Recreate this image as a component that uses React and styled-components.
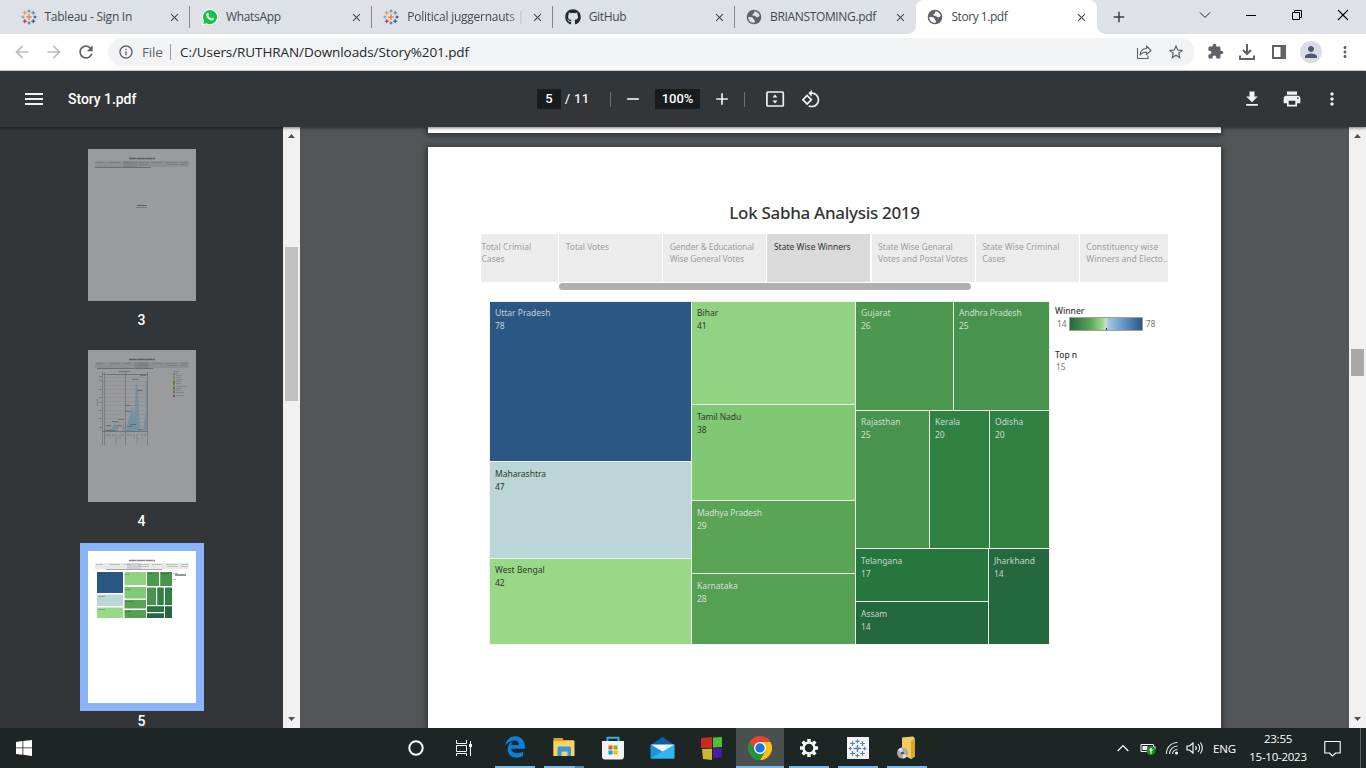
import React from "react";
import styled, { createGlobalStyle, css } from "styled-components";
import {
  MdClose, MdAdd, MdArrowBack, MdArrowForward, MdRefresh, MdInfoOutline,
  MdStarBorder, MdExtension, MdPerson, MdMoreVert, MdMenu, MdRemove, MdFileDownload,
  MdPrint, MdOutlineRotate90DegreesCcw,
} from "react-icons/md";
import { FaGithub, FaEdgeLegacy } from "react-icons/fa6";

const ui = '"Open Sans", "Noto Sans", sans-serif';
const viz = '"Noto Sans", "Open Sans", sans-serif';

const Global = createGlobalStyle`
  * { box-sizing: border-box; }
  body { margin: 0; overflow: hidden; }
  svg { display: block; flex: none; }
`;

const Screen = styled.div`
  width: 1366px;
  height: 768px;
  display: flex;
  flex-direction: column;
  overflow: hidden;
  background: #525659;
  font-family: ${ui};
`;

/* ---------- browser tabs ---------- */
const TabStrip = styled.div`
  height: 34px;
  flex: none;
  display: flex;
  padding-left: 9px;
  background: #dee1e6;
`;
const Tab = styled.div`
  position: relative;
  width: 181.4px;
  height: 34px;
  display: flex;
  align-items: center;
  padding: 0 8px 0 11.5px;
  color: #45494d;
  border-right: 1px solid transparent;
  border-image: ${(p) => (p.$sep ? "linear-gradient(transparent 7px, #85888c 7px, #85888c 27px, transparent 27px) 1" : "none")};
  ${(p) => p.$active && css`
    background: #fff;
    border-radius: 8px 8px 0 0;
    &::before, &::after {
      content: "";
      position: absolute;
      bottom: 0;
      width: 8px;
      height: 8px;
    }
    &::before { left: -8px; background: radial-gradient(circle at 0 0, transparent 7.5px, #fff 8px); }
    &::after { right: -9px; background: radial-gradient(circle at 100% 0, transparent 7.5px, #fff 8px); }
  `}
`;
const TabTitle = styled.div`
  flex: 1;
  margin-left: 8px;
  font-size: 12px;
  line-height: 16px;
  letter-spacing: ${(p) => p.$ls || 0}px;
  white-space: nowrap;
  ${(p) => p.$fade && css`
    mask-image: linear-gradient(90deg, #000 100px, transparent 119px);
  `}
`;
const NewTab = styled.div`
  width: 44px;
  display: grid;
  place-items: center;
  color: #3c4043;
`;
const WindowButtons = styled.div`
  margin-left: auto;
  display: flex;
  height: 29px;
  align-items: center;
  svg { width: 46px; }
`;

/* ---------- address row ---------- */
const AddressRow = styled.div`
  height: 37px;
  flex: none;
  display: flex;
  align-items: center;
  padding: 0 12px 1px 12px;
  background: #fff;
  border-bottom: 1px solid #dcdedb;
  color: #5f6368;
`;
const NavIcons = styled.div`
  display: flex;
  flex: none;
  gap: 12px;
  width: 96px;
  color: #babcbe;
  svg:last-child { color: #5f6368; }
`;
const Omnibox = styled.div`
  width: 1086px;
  flex: none;
  height: 28px;
  display: flex;
  align-items: center;
  padding: 0 9px 0 10px;
  border-radius: 14px;
  background: #f1f3f4;
`;
const Scheme = styled.span`
  margin-left: 8px;
  width: 28px;
  font-size: 13.5px;
  line-height: 20px;
  letter-spacing: -0.2px;
  color: #5f6368;
`;
const Divider = styled.i`
  width: 1px;
  height: ${(p) => p.$h}px;
  background: ${(p) => p.$c};
`;
const Url = styled.span`
  margin-left: 9px;
  flex: 1;
  font-size: 13.5px;
  line-height: 20px;
  letter-spacing: -0.08px;
  color: #25282b;
`;
const Actions = styled.div`
  display: flex;
  align-items: center;
  gap: ${(p) => p.$gap}px;
  margin-left: ${(p) => p.$ml || 0}px;
`;
const Avatar = styled.div`
  width: 22px;
  height: 22px;
  border-radius: 50%;
  display: grid;
  place-items: center;
  background: #dadce3;
  color: #4b5a70;
`;

/* ---------- pdf toolbar ---------- */
const PdfToolbar = styled.div`
  position: relative;
  z-index: 2;
  height: 56px;
  flex: none;
  display: flex;
  align-items: center;
  padding: 0 22px;
  background: #323639;
  color: #f1f1f1;
  font: 500 14px/20px Roboto, sans-serif;
  box-shadow: 0 1px 3px rgba(0, 0, 0, 0.5);
`;
const DocName = styled.div`
  margin-left: 22px;
  width: 469px;
  letter-spacing: -0.05px;
  color: #fff;
`;
const Field = styled.div`
  width: ${(p) => p.$w}px;
  height: 20px;
  background: #191b1c;
  color: #fff;
  text-align: center;
  font-size: 13px;
`;
const PageCount = styled.div`
  width: 45px;
  margin-left: 4px;
  font-size: 13px;
  letter-spacing: 0.35px;
  white-space: pre;
`;
const Spacer = styled.i`
  width: ${(p) => p.$w}px;
`;
const RightTools = styled.div`
  margin-left: auto;
  display: flex;
  gap: 20px;
  margin-right: 2px;
`;

/* ---------- viewer ---------- */
const Viewer = styled.div`
  height: 601px;
  flex: none;
  display: flex;
`;
const Sidebar = styled.div`
  width: 283px;
  background: #323639;
  display: flex;
  flex-direction: column;
  align-items: center;
  padding-top: 14px;
`;
const ThumbFrame = styled.div`
  width: 124px;
  height: 168px;
  flex: none;
  padding: 8px;
  background: ${(p) => (p.$selected ? "#8ab4f8" : "transparent")};
`;
const ThumbPage = styled.div`
  width: 108px;
  height: 152px;
  background: ${(p) => (p.$dim ? "#9a9b9d" : "#fff")};
`;
const ThumbNumber = styled.div`
  height: ${(p) => (p.$last ? 17 : 33)}px;
  flex: none;
  color: #fff;
  font: 500 14px/22px Roboto, sans-serif;
  ${(p) => p.$last && "line-height: 14px; padding-top: 3px;"}
`;
const ScrollTrack = styled.div`
  width: 17px;
  flex: none;
  display: flex;
  flex-direction: column;
  align-items: center;
  background: #f1f1f1;
  padding: 7px 0;
`;
const ScrollThumb = styled.div`
  width: 13px;
  height: ${(p) => p.$h}px;
  margin-top: ${(p) => p.$top}px;
  margin-bottom: auto;
  background: ${(p) => p.$c};
`;
const Canvas = styled.div`
  flex: 1;
  display: flex;
  flex-direction: column;
  align-items: center;
  overflow: hidden;
  background: #525659;
`;
const PrevPage = styled.div`
  width: 793px;
  height: 6px;
  flex: none;
  background: #fff;
  margin-bottom: 14px;
  box-shadow: 0 1px 5px 2px rgba(0, 0, 0, 0.35);
`;
const Page = styled.div`
  width: 793px;
  height: 700px;
  flex: none;
  background: #fff;
  padding: 54px 53px 0;
  box-shadow: 0 1px 5px 2px rgba(0, 0, 0, 0.35);
  font-family: ${viz};
`;
const Title = styled.div`
  height: 33px;
  text-align: center;
  font-weight: 500;
  font-size: 17px;
  line-height: 24px;
  letter-spacing: -0.3px;
  color: #333;
`;
const StoryTabs = styled.div`
  display: grid;
  grid-template-columns: 77px 103px 103px 103px 103px 103px 88px;
  column-gap: 1.15px;
  height: 48px;
`;
const StoryTab = styled.div`
  padding: ${(p) => (p.$first ? "7px 0 0 0.5px" : "7px 0 0 6.5px")};
  background: ${(p) => (p.$active ? "#dadada" : "#ececec")};
  color: ${(p) => (p.$active ? "#333" : "#a0a0a0")};
  font-size: 8.5px;
  line-height: 12px;
  white-space: pre;
  letter-spacing: ${(p) => p.$ls || 0}px;
`;
const StoryScroll = styled.div`
  width: 412px;
  height: 7px;
  margin: 1px 0 11px 78px;
  border-radius: 4px;
  background: #b0b0b0;
`;
const Dashboard = styled.div`
  display: flex;
  padding-left: 8px;
`;
const TreeMap = styled.div`
  width: 561px;
  height: 344px;
  flex: none;
  display: flex;
  gap: 1px;
  padding: 1px;
  background: #eef4ec;
`;
const Stack = styled.div`
  display: flex;
  flex-direction: ${(p) => (p.$row ? "row" : "column")};
  gap: 1px;
  ${(p) => p.$w && `width: ${p.$w}px;`}
  ${(p) => p.$h && `height: ${p.$h}px;`}
`;
const Cell = styled.div`
  ${(p) => (p.$w ? `width: ${p.$w}px;` : "")}
  ${(p) => (p.$h ? `height: ${p.$h}px;` : "")}
  background: ${(p) => p.$bg};
  color: ${(p) => (p.$dark ? "#2f3b2c" : "rgba(255,255,255,0.72)")};
  padding: ${(p) => p.$pt || 5}px 0 0 5px;
  font-size: 8.5px;
  line-height: 12.6px;
  letter-spacing: ${(p) => p.$ls || 0}px;
  white-space: nowrap;
`;
const Legend = styled.div`
  padding: 4px 0 0 5px;
  font-size: 8.5px;
  line-height: 12px;
  color: #777;
`;
const LegendTitle = styled.div`
  font-weight: 500;
  color: #333;
  ${(p) => p.$top && `margin-top: ${p.$top}px;`}
`;
const Ramp = styled.div`
  display: flex;
  align-items: center;
  gap: 2.5px;
  padding-left: 2px;
  height: 13px;
`;
const TopValue = styled.div`
  padding-left: 1px;
`;
const RampBar = styled.div`
  width: 74px;
  height: 14px;
  border: 1px solid #a59f98;
  background:
    linear-gradient(#222, #222) 36px 100% / 1px 2px no-repeat,
    linear-gradient(90deg, #24693d, #5aa456 28%, #98d887 45%, #cfdcd3 50%, #9cc3e0 54%, #6a9cca 72%, #2a5783);
`;

/* ---------- taskbar ---------- */
const Taskbar = styled.div`
  height: 40px;
  flex: none;
  display: flex;
  background: #1e2525;
  color: #fff;
`;
const Slot = styled.div`
  width: ${(p) => p.$w || 49}px;
  margin-left: ${(p) => p.$ml || 0}px;
  height: 40px;
  display: flex;
  flex-direction: column;
  align-items: center;
  padding-top: 8px;
  justify-content: space-between;
`;
const MiddleSlot = styled(Slot)`
  padding: 0;
  justify-content: center;
`;
const Highlight = styled(Slot)`
  width: 48px;
  margin-right: 1px;
  background: #4b504f;
`;
const Underline = styled.i`
  width: ${(p) => (p.$wide ? 48 : 40)}px;
  height: 2px;
  background: ${(p) => (p.$split ? "linear-gradient(90deg, #76b9ed 31px, #3b6a8c 31px, #4f86ad 32px)" : "#76b9ed")};
`;
const Tray = styled.div`
  margin-left: auto;
  display: flex;
  align-items: center;
  width: 251px;
`;
const Language = styled.div`
  width: 34px;
  margin-left: 9px;
  font-size: 11.5px;
  letter-spacing: -0.2px;
`;
const Clock = styled.div`
  width: 62px;
  text-align: center;
  font-size: 11.5px;
  line-height: 18px;
  letter-spacing: -0.25px;
  white-space: nowrap;
`;

/* ---------- drawings ---------- */
const PLUSES = [
  [8, 8, 3, "#e8762b"], [8, 2, 1.6, "#5b879b"], [8, 14, 1.6, "#5b6591"], [2, 8, 1.5, "#7099a6"],
  [14, 8, 1.5, "#1f447e"], [3.8, 3.8, 2, "#eb912c"], [12.2, 3.8, 2, "#59879b"],
  [3.8, 12.2, 2, "#c72035"], [12.2, 12.2, 2, "#1f447e"],
];
const TableauMark = ({ size, mono }) => (
  <svg width={size} height={size} viewBox="0 0 16 16">
    {PLUSES.map(([x, y, r, c], i) => (
      <path key={i} d={`M${x - r} ${y}H${x + r}M${x} ${y - r}V${y + r}`} stroke={mono || c} strokeWidth={r > 2.5 ? 1.2 : 1} />
    ))}
  </svg>
);
const Globe = ({ bg }) => (
  <svg width="16" height="16" viewBox="0 0 16 16">
    <circle cx="8" cy="8" r="7.300" fill="#5f6368" />
    <path d="M8.600 2.200c2.400.3 4.400 2 5.100 4.400-.6 1.200-1.500 1.900-2.900 1.700-1.100-.2-1.200-1.300-2.300-1.500-1-.1-1.900 0-2.100-.9-.2-.9.900-1 1.500-1.500.5-.5.100-1.500.7-2.200z" fill={bg} />
    <path d="M2.200 8.200c1.800-.2 3.700-.2 4.700.5 1 .8.500 1.800 1.300 2.300.9.500 1 1.300.3 2.800-3.400.2-6.100-2.200-6.300-5.600z" fill={bg} />
  </svg>
);
const WhatsAppMark = () => (
  <svg width="16" height="16" viewBox="0 0 16 16">
    <path d="M8 0a8 8 0 1 1-3.800 15L0 16l1.100-4.200A8 8 0 0 1 8 0z" fill="#fff" />
    <path d="M8 .9a7.100 7.100 0 1 1-3.500 13.300L1.200 15l.9-3.300A7.100 7.100 0 0 1 8 .9z" fill="#12c24a" />
    <path d="M5.300 4c.5-.4.9-.2 1.100.3l.5 1.200c.1.4-.5.900-.6 1.200.6 1.200 1.500 2 2.800 2.600.3-.1.8-1 1.200-.9l1.400.700c.5.300.3 1.100-.1 1.600-.7.700-1.700.9-2.900.5C6.300 10.400 4.900 8.700 4.300 7c-.3-1.200 0-2.300 1-3z" fill="#fff" />
  </svg>
);
const ShareIcon = () => (
  <svg width="18" height="18" viewBox="0 0 18 18" fill="none" stroke="#5f6368" strokeWidth="1.100">
    <path d="M2.500 5v10.500h10.500V12.500" />
    <path d="M5 12c.3-4 2.600-6.300 6.500-6.500V3l4.500 4.500-4.500 4.200V9C8.700 9 6.600 10 5 12z" strokeLinejoin="round" />
  </svg>
);
const DownloadTray = () => (
  <svg width="18" height="18" viewBox="0 0 18 18" fill="none" stroke="#5f6368" strokeWidth="2">
    <path d="M9 1v9.500M5 7l4 4 4-4M2 12.500V16h14v-3.500" />
  </svg>
);
const SidePanel = () => (
  <svg width="14" height="14" viewBox="0 0 14 14">
    <path d="M0 0h14v14H0zM2 2v10h6.500V2z" fill="#5f6368" fillRule="evenodd" />
  </svg>
);
const FitPage = () => (
  <svg width="20" height="20" viewBox="0 0 20 20">
    <rect x="1.900" y="3" width="16.400" height="14" rx="1" fill="none" stroke="#f1f1f1" strokeWidth="1.700" />
    <path d="M7.500 8.600h5L10 5.600zM7.500 11.400h5L10 14.400z" fill="#f1f1f1" />
  </svg>
);
const Arrow = ({ down }) => (
  <svg width="7" height="4" viewBox="0 0 7 4">
    <path d={down ? "M0 0h7L3.500 4z" : "M0 4h7L3.500 0z"} fill="#505050" />
  </svg>
);
const WinLogo = () => (
  <svg width="16" height="16" viewBox="0 0 16 16" fill="#fff">
    <path d="M0 2l6.500-.9v6.400H0zM7.300 1L16 0v7.500H7.300zM0 8.300h6.500v6.400L0 14zM7.300 8.300H16V16l-8.700-1.200z" />
  </svg>
);
const TaskView = () => (
  <svg width="18" height="16" viewBox="0 0 18 16" fill="none" stroke="#fff" strokeWidth="1">
    <path d="M1.500 0v3.500h10V0M1.500 5.500h10v6h-10zM1.500 16v-2.500h10V16M15.500 1v3M15.500 7v9" />
    <path d="M14 4h3v3h-3z" fill="#fff" stroke="none" />
  </svg>
);
const Explorer = () => (
  <svg width="22" height="22" viewBox="0 0 22 22">
    <path d="M.5 2h9l1 2H21v16H.5z" fill="#e0a321" />
    <path d="M.5 5h21v15H.5z" fill="#fbd466" />
    <path d="M4.500 20v-8a1.500 1.500 0 0 1 1.500-1.500h10.500A1.500 1.500 0 0 1 18 12v8h-3.500v-4.500h-6V20z" fill="#3c96dc" />
  </svg>
);
const Store = () => (
  <svg width="24" height="24" viewBox="0 0 24 24">
    <path d="M6.500 6V1.800h11V6" fill="none" stroke="#22b5e8" strokeWidth="2" />
    <path d="M1 5h22v16a3 3 0 0 1-3 2.500H4A3 3 0 0 1 1 21z" fill="#f3f3f3" />
    <path d="M7.500 9.500h4v4h-4z" fill="#f05325" /><path d="M12.500 9.500h4v4h-4z" fill="#7fb900" />
    <path d="M7.500 14.500h4v4h-4z" fill="#00a3ee" /><path d="M12.500 14.500h4v4h-4z" fill="#ffb800" />
  </svg>
);
const Mail = () => (
  <svg width="25" height="24" viewBox="0 0 25 24">
    <path d="M.5 9L12.500 1l12 8v5H.5z" fill="#0a5fae" />
    <path d="M1 8.500h23.500L13 18z" fill="#f4f6f8" />
    <path d="M.5 8.500L24.500 22.500H.5z" fill="#1c93de" />
    <path d="M24.500 8.500v14H.5z" fill="#33b6ef" />
  </svg>
);
const Blocks = () => (
  <svg width="23" height="24" viewBox="0 0 23 24">
    <path d="M1 2l11-1v11H1z" fill="#c62a20" /><path d="M13 1.500l9-.5v10l-9 .5z" fill="#50bd34" />
    <path d="M2 13l10-.3V24l-9-1z" fill="#c9b934" /><path d="M13 12.500h9l-.5 8.500-8.500 1.500z" fill="#4b1bad" />
  </svg>
);
const Chrome = () => (
  <svg width="24" height="24" viewBox="0 0 24 24">
    <path d="M12 12V6h10.400A12 12 0 0 1 12 24l5.200-9z" fill="#fbc116" />
    <path d="M12 12l5.200 3L12 24A12 12 0 0 1 1.600 6l5.200 9z" fill="#229342" />
    <path d="M1.600 6h10.400v6l-5.200 3z" fill="#229342" />
    <path d="M1.600 6A12 12 0 0 1 22.400 6H12a6 6 0 0 0-5.200 3L5.500 12z" fill="#ea4335" />
    <circle cx="12" cy="12" r="6" fill="#fff" /><circle cx="12" cy="12" r="4.700" fill="#1a73e8" />
  </svg>
);
const Gear = () => (
  <svg width="24" height="24" viewBox="0 0 24 24" fill="none" stroke="#fff">
    <circle cx="12" cy="12" r="5.500" strokeWidth="2.400" />
    {[0, 45, 90, 135, 180, 225, 270, 315].map((a) => (
      <path key={a} d="M12 6V3" strokeWidth="3.400" transform={`rotate(${a} 12 12)`} />
    ))}
  </svg>
);
const TableauTile = styled.div`
  width: 22px;
  height: 22px;
  margin-top: 1px;
  display: grid;
  place-items: center;
  background: #f4f5f6;
`;
const FolderDisc = () => (
  <svg width="22" height="24" viewBox="0 0 22 24">
    <path d="M6 1.500L17 .5l2 2v18l-4 2.500L6 18z" fill="#f2cd5c" />
    <path d="M15 5l4-2.500v18L15 23z" fill="#d6a532" />
    <circle cx="6.500" cy="17" r="5.500" fill="#a7a9aa" /><path d="M6.500 17L2 14a5 5 0 0 1 4-2.500zM6.500 17l4.500 3a5 5 0 0 1-4 2.500z" fill="#e0e1e2" />
    <circle cx="6.500" cy="17" r="1.500" fill="#555" />
  </svg>
);
const WinChevron = () => (
  <svg width="46" height="12" viewBox="0 0 46 12"><path d="M18 3.500l5 5 5-5" fill="none" stroke="#222" /></svg>
);
const WinMin = () => (
  <svg width="46" height="12" viewBox="0 0 46 12"><path d="M18 6.500h10" stroke="#000" /></svg>
);
const WinRestore = () => (
  <svg width="46" height="12" viewBox="0 0 46 12" fill="none" stroke="#000"><path d="M18.500 3.500h7v7h-7zM20.500 3.500v-2h7v7h-2" /></svg>
);
const WinClose = () => (
  <svg width="46" height="12" viewBox="0 0 46 12"><path d="M18 1l10 10M28 1L18 11" stroke="#000" strokeWidth="1.100" /></svg>
);
const Battery = () => (
  <svg width="16" height="15" viewBox="0 0 16 15">
    <path d="M1 3.500h12.500v7H1z" fill="none" stroke="#fff" /><path d="M2.500 5h5v4h-5zM14 5.500h1.500v3H14z" fill="#fff" />
    <circle cx="11" cy="9.500" r="4.500" fill="#109418" />
    <path d="M11 6.500L13 9l-1.400 1.500V13h-1.200v-2.500L9 9z" fill="#d8f3d8" />
  </svg>
);
const Wifi = () => (
  <svg width="14" height="14" viewBox="0 0 14 14" fill="none" stroke="#e0e3e3" strokeWidth="1.100">
    <path d="M1.500 13A11 11 0 0 1 12.500 1.500M4.500 13a8 8 0 0 1 8-8M7.500 13a5 5 0 0 1 5-4.500" />
    <circle cx="11.500" cy="12" r="1.500" fill="#fff" stroke="none" />
  </svg>
);
const Sound = () => (
  <svg width="18" height="14" viewBox="0 0 18 14" fill="none" stroke="#fff" strokeWidth="1.100">
    <path d="M1 5h2.500L7 2v10L3.500 9H1zM9.500 5a3 3 0 0 1 0 4M12 3a6 6 0 0 1 0 8M14.300 1.500a8.500 8.500 0 0 1 0 11" />
  </svg>
);
const Notice = () => (
  <svg width="17" height="17" viewBox="0 0 17 17" fill="none" stroke="#fff" strokeWidth="1.100">
    <path d="M.8 1.500h15.400v11.500h-4.500L8.500 16l-3-3H.8z" strokeLinejoin="round" />
  </svg>
);
const Caret = () => (
  <svg width="12" height="8" viewBox="0 0 12 8"><path d="M.7 7L6 1.500 11.300 7" fill="none" stroke="#fff" strokeWidth="1.200" /></svg>
);

const thumbHead = (dim, active, scroll) => (
  <>
    <path d="M41 9.500h26" stroke={dim ? "#5c5d5f" : "#888"} strokeWidth="1.300" strokeDasharray="7 .4 9 .5" />
    <path d="M7 12h94v6H7z" fill={dim ? "#8e8f91" : "#e8e8e8"} />
    <path d={`M${active} 12h14v6h-14z`} fill={dim ? "#838486" : "#cfcfcf"} />
    <path d="M8 13.500h7M22 13.500h10M36 13.500h7M50 13.500h11M64 13.500h10M78 13.500h11M93 13.500h7M50 15.500h11M79 15.500h11M93 15.500h6" stroke={dim ? "#77787a" : "#b5b5b5"} strokeWidth=".8" />
    <path d={`M${scroll} 18.500h56`} stroke={dim ? "#6d6e70" : "#a8a8a8"} />
  </>
);
const Thumb3 = () => (
  <svg width="108" height="152" viewBox="0 0 108 152">
    {thumbHead(true, 35, 7)}
    <path d="M49 56.500h9.500" stroke="#5e6062" /><path d="M48 58.500h11" stroke="#7b7c7e" />
  </svg>
);
const Thumb4 = () => (
  <svg width="108" height="152" viewBox="0 0 108 152">
    {thumbHead(true, 46, 9)}
    <path d="M17 27.500h42M17 31.500h42M17 35.500h42M17 39.500h42M17 43.500h42M17 47.500h42M17 51.500h42M17 55.500h42M17 60.500h42M17 64.500h42M17 68.500h42M17 72.500h42M17 76.500h42" stroke="#8b8d90" strokeWidth=".6" />
    <path d="M17 81l5-2 2-1 3-5 3 5v3zM34 81l2-9 1 9zM38 81l5-20 1-5 2 14 2-38 2 6 2 43zM55 81l3-20V31h1v50z" fill="#7390a4" />
    <path d="M14.500 22v73M16.500 22v73M37.500 22v73M59.500 22v73" stroke="#77787a" strokeWidth=".9" />
    <path d="M14 24.500h46M14 81.500h46" stroke="#6c6d6f" strokeWidth=".9" />
    <path d="M31 21.500h11M44 29.500h7M49 40.500h6M37 55.500h6M38 61.500h5M30 69.500h6M24 71.500h6M18 75.500h5M29 75.500h5M42 74.500h6M39 76.500h6M52 25.500h6M17 80.500h10M50 79.500h5" stroke="#626466" strokeWidth=".8" />
    <path d="M11 26.500h3M11 30.500h3M11 39.500h3M11 47.500h3M11 52.500h3M11 60.500h3M11 68.500h3M11 77.500h3M9.500 49v7" stroke="#6d6e70" strokeWidth=".7" />
    <path d="M18 84v3M20 84v2M22 84v3M25 84v3M28 84v10M32 84v5M35 84v3M40 84v3M43 84v3M46 84v4M49 84v10M54 84v5M57 84v3" stroke="#7a7b7d" strokeWidth=".9" strokeDasharray="2 .6" />
    <path d="M85 21.500h6M88 23.500h2M88 25.500h6M88 27.500h5M88 29.500h7M88 31.500h5M88 33.500h5M88 36.500h11M88 38.500h6M88 40.500h4M88 42.500h8M88 45.500h8" stroke="#77787a" strokeWidth=".7" />
    {["#4e79a7", "#738fa3", "#b3793f", "#b08b55", "#4c7e47", "#59865c", "#a18a38", "#3f7675", "#648f9b", "#9a5b64", "#bb8080", "#5d5d5f"].map((c, i) => (
      <path key={c} d={`M85 ${23 + i * 2}h2v2h-2z`} fill={c} />
    ))}
  </svg>
);
const Thumb5 = () => (
  <svg width="108" height="152" viewBox="0 0 108 152">
    {thumbHead(false, 39, 18)}
    <path d="M9 21h26v21H9z" fill="#2a5783" /><path d="M9 43.500h26V55H9z" fill="#bcd5d6" /><path d="M9 56.500h26V67H9z" fill="#98d887" />
    <path d="M36.500 21H58v13H36.500z" fill="#91d283" /><path d="M36.500 36H58v11.500H36.500z" fill="#80c873" />
    <path d="M36.500 49H58v8.500H36.500z" fill="#5aa456" /><path d="M36.500 59H58v8H36.500z" fill="#55a053" />
    <path d="M59 21h12v14H59z" fill="#4b984e" /><path d="M72.200 21H84v14H72.200z" fill="#48944e" />
    <path d="M59 36.500h9V54h-9z" fill="#48944e" /><path d="M69.200 36.500h6.600V54h-6.600zM77 36.500h7V54h-7z" fill="#318143" />
    <path d="M59 55.200h17V61H59z" fill="#27763d" /><path d="M59 62.200h17V67H59zM77 55.200h7V67h-7z" fill="#24693d" />
    <path d="M10 22.500h7M10 24.500h2M10 45.500h7M10 58.500h7M37 23.500h4M37 38.500h6M37 50.500h9M37 60.500h6M60 22.500h4M73 22.500h8" stroke="rgba(30,50,40,.4)" strokeWidth=".7" />
    <path d="M85 22.500h5M85 28.500h3" stroke="#aaa" strokeWidth=".8" />
    <path d="M87 24h6" stroke="#8aa58a" strokeWidth="2" /><path d="M93 24h5" stroke="#8799aa" strokeWidth="2" />
  </svg>
);

const TABS = [
  { icon: <TableauMark size={16} />, title: "Tableau - Sign In", sep: true, ls: -0.25 },
  { icon: <WhatsAppMark />, title: "WhatsApp", sep: true, ls: -0.3 },
  { icon: <TableauMark size={16} />, title: "Political juggernauts |", sep: true, fade: true, ls: -0.25 },
  { icon: <FaGithub size={16} color="#24292f" />, title: "GitHub", sep: true, ls: -0.35 },
  { icon: <Globe bg="#dee1e6" />, title: "BRIANSTOMING.pdf", ls: -0.35 },
  { icon: <Globe bg="#fff" />, title: "Story 1.pdf", active: true, ls: -0.45 },
];
const STORY = [
  "Total Crimial\nCases", "Total Votes", "Gender & Educational\nWise General Votes", "State Wise Winners",
  "State Wise Genaral\nVotes and Postal Votes", "State Wise Criminal\nCases", "Constituency wise\nWinners and Electo..",
];
const STORY_SPACING = [0, 0, -0.15, 0, -0.03, 0, 0];

const State = ({ name, n, ...rest }) => (
  <Cell {...rest}>{name}<br />{n}</Cell>
);

export default function App() {
  return (
    <Screen>
      <Global />
      <TabStrip>
        {TABS.map((t) => (
          <Tab key={t.title} $sep={t.sep} $active={t.active}>
            {t.icon}
            <TabTitle $fade={t.fade} $ls={t.ls}>{t.title}</TabTitle>
            <MdClose size={13} color="#45494d" />
          </Tab>
        ))}
        <NewTab><MdAdd size={18} /></NewTab>
        <WindowButtons><WinChevron /><WinMin /><WinRestore /><WinClose /></WindowButtons>
      </TabStrip>

      <AddressRow>
        <NavIcons><MdArrowBack size={20} /><MdArrowForward size={20} /><MdRefresh size={20} /></NavIcons>
        <Omnibox>
          <MdInfoOutline size={16} />
          <Scheme>File</Scheme>
          <Divider $h={16} $c="#9a9da1" />
          <Url>C:/Users/RUTHRAN/Downloads/Story%201.pdf</Url>
          <Actions $gap={14}><ShareIcon /><MdStarBorder size={18} /></Actions>
        </Omnibox>
        <Actions $gap={14} $ml={13}>
          <MdExtension size={17} /><DownloadTray />
          <Actions $gap={14} $ml={2}><SidePanel /><Avatar><MdPerson size={18} /></Avatar></Actions>
          <MdMoreVert size={18} />
        </Actions>
      </AddressRow>

      <PdfToolbar>
        <MdMenu size={24} />
        <DocName>Story 1.pdf</DocName>
        <Field $w={24}>5</Field>
        <PageCount>/ 11</PageCount>
        <Divider $h={15} $c="#6d7072" />
        <Spacer $w={12} /><MdRemove size={20} />
        <Spacer $w={12} /><Field $w={45}>100%</Field>
        <Spacer $w={12} /><MdAdd size={20} />
        <Spacer $w={12} /><Divider $h={15} $c="#6d7072" />
        <Spacer $w={20} /><FitPage />
        <Spacer $w={16} /><MdOutlineRotate90DegreesCcw size={20} />
        <RightTools><MdFileDownload size={20} /><MdPrint size={20} /><MdMoreVert size={20} /></RightTools>
      </PdfToolbar>

      <Viewer>
        <Sidebar>
          <ThumbFrame><ThumbPage $dim><Thumb3 /></ThumbPage></ThumbFrame>
          <ThumbNumber>3</ThumbNumber>
          <ThumbFrame><ThumbPage $dim><Thumb4 /></ThumbPage></ThumbFrame>
          <ThumbNumber>4</ThumbNumber>
          <ThumbFrame $selected><ThumbPage><Thumb5 /></ThumbPage></ThumbFrame>
          <ThumbNumber $last>5</ThumbNumber>
        </Sidebar>
        <ScrollTrack><Arrow /><ScrollThumb $top={109} $h={154} $c="#c1c1c1" /><Arrow down /></ScrollTrack>
        <Canvas>
          <PrevPage />
          <Page>
            <Title>Lok Sabha Analysis 2019</Title>
            <StoryTabs>
              {STORY.map((s, i) => (
                <StoryTab key={s} $first={i === 0} $active={i === 3} $ls={STORY_SPACING[i]}>{s}</StoryTab>
              ))}
            </StoryTabs>
            <StoryScroll />
            <Dashboard>
              <TreeMap>
                <Stack $w={201}>
                  <State name="Uttar Pradesh" n={78} $h={159} $bg="#2a5783" />
                  <State name="Maharashtra" n={47} $h={96} $pt={6} $bg="#bcd5d6" $dark />
                  <State name="West Bengal" n={42} $h={85} $bg="#98d887" $dark />
                </Stack>
                <Stack $w={163}>
                  <State name="Bihar" n={41} $h={102} $bg="#91d283" $dark />
                  <State name="Tamil Nadu" n={38} $h={95} $pt={6} $ls={-0.1} $bg="#80c873" $dark />
                  <State name="Madhya Pradesh" n={29} $h={72} $pt={6} $ls={-0.15} $bg="#5aa456" />
                  <State name="Karnataka" n={28} $h={70} $pt={6} $bg="#55a053" />
                </Stack>
                <Stack $w={193}>
                  <Stack $row $h={108}>
                    <State name="Gujarat" n={26} $w={97} $bg="#4b984e" />
                    <State name="Andhra Pradesh" n={25} $w={95} $ls={-0.1} $bg="#48944e" />
                  </Stack>
                  <Stack $row $h={137}>
                    <State name="Rajasthan" n={25} $w={73} $bg="#48944e" />
                    <State name="Kerala" n={20} $w={59} $bg="#318143" />
                    <State name="Odisha" n={20} $w={59} $bg="#318143" />
                  </Stack>
                  <Stack $row $h={95}>
                    <Stack $w={132}>
                      <State name="Telangana" n={17} $h={52} $pt={6} $bg="#27763d" />
                      <State name="Assam" n={14} $h={42} $pt={6} $bg="#24693d" />
                    </Stack>
                    <State name="Jharkhand" n={14} $w={60} $pt={6} $bg="#24693d" />
                  </Stack>
                </Stack>
              </TreeMap>
              <Legend>
                <LegendTitle>Winner</LegendTitle>
                <Ramp><span>14</span><RampBar /><span>78</span></Ramp>
                <LegendTitle $top={19}>Top n</LegendTitle>
                <TopValue>15</TopValue>
              </Legend>
            </Dashboard>
          </Page>
        </Canvas>
        <ScrollTrack><Arrow /><ScrollThumb $top={211} $h={27} $c="#a8a8a8" /><Arrow down /></ScrollTrack>
      </Viewer>

      <Taskbar>
        <MiddleSlot $w={48}><WinLogo /></MiddleSlot>
        <MiddleSlot $w={48} $ml={344}>
          <svg width="24" height="24" viewBox="0 0 24 24"><circle cx="12" cy="12" r="6.700" fill="none" stroke="#fff" strokeWidth="2" /></svg>
        </MiddleSlot>
        <MiddleSlot $w={48}><TaskView /></MiddleSlot>
        <Slot $ml={2}><FaEdgeLegacy size={22} color="#0a7fdc" /><Underline /></Slot>
        <Slot><Explorer /><Underline $split /></Slot>
        <Slot><Store /></Slot>
        <Slot $ml={1}><Mail /></Slot>
        <Slot><Blocks /></Slot>
        <Highlight><Chrome /><Underline $wide /></Highlight>
        <Slot $ml={-1}><Gear /><Underline /></Slot>
        <Slot><TableauTile><TableauMark size={19} mono="#4e86ad" /></TableauTile><Underline /></Slot>
        <Slot><FolderDisc /><Underline /></Slot>
        <Tray>
          <Actions $gap={11} $ml={2}><Caret /><Battery /></Actions>
          <Actions $ml={9}><Wifi /></Actions>
          <Actions $ml={7}><Sound /></Actions>
          <Language>ENG</Language>
          <Clock>23:55<br />15-10-2023</Clock>
          <Actions $ml={15} $gap={19}><Notice /><Divider $h={40} $c="#5b6060" /></Actions>
        </Tray>
      </Taskbar>
    </Screen>
  );
}
